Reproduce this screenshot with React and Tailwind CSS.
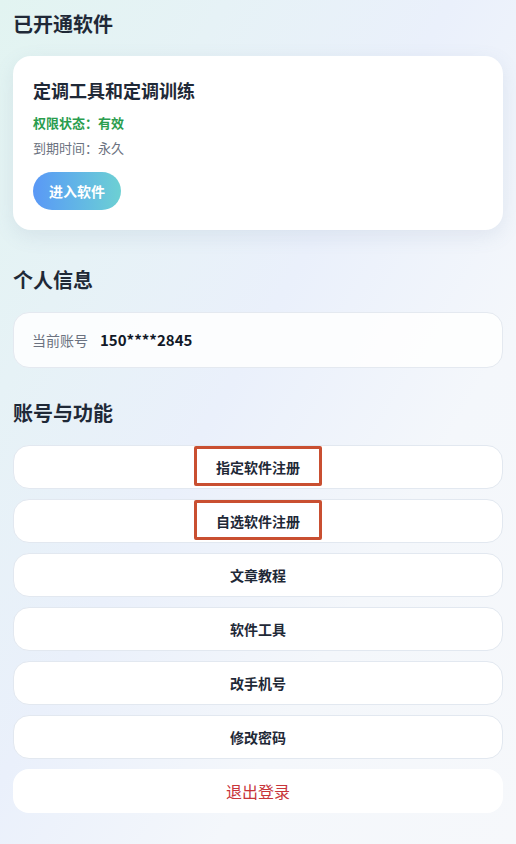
import React from 'react';

const actions = [
    { label: '指定软件注册', marked: true },
    { label: '自选软件注册', marked: true },
    { label: '文章教程' },
    { label: '软件工具' },
    { label: '改手机号' },
    { label: '修改密码' },
];

const SectionTitle = ({ children, className = '' }) => (
    <h2 className={`text-[20px] leading-7 font-bold text-[#1f2937] ${className}`}>{children}</h2>
);

const App = () => {
    return (
        <div
            className="min-h-[844px] w-full bg-[linear-gradient(120deg,#e2f4f1_0%,#eaf0fb_45%,#f4f7fb_70%,#f6f8fb_100%)] px-[13px] pt-[10px] pb-8"
            style={{ fontFamily: '"Noto Sans CJK SC", "Noto Sans", sans-serif' }}
        >
            {/* Opened software */}
            <SectionTitle>已开通软件</SectionTitle>
            <div className="mt-[18px] rounded-[18px] bg-white p-5 shadow-[0_6px_20px_rgba(100,120,160,0.12)]">
                <h3 className="text-[18px] leading-7 font-bold text-[#1f2937]">定调工具和定调训练</h3>
                <p className="mt-[9px] text-[13px] leading-5 font-bold text-[#2a9d4e]">权限状态：有效</p>
                <p className="mt-[5px] text-[13px] leading-5 text-[#6b7280]">到期时间：永久</p>
                <button className="mt-[14px] h-[38px] px-4 rounded-full bg-gradient-to-r from-[#5a98f6] to-[#6dd0d3] text-[14px] font-bold text-white">
                    进入软件
                </button>
            </div>

            {/* Personal info */}
            <SectionTitle className="mt-9">个人信息</SectionTitle>
            <div className="mt-[18px] h-14 rounded-2xl border border-[#e4e9f0] bg-white/85 flex items-center px-[18px] gap-3">
                <span className="text-[14px] text-[#6b7280]">当前账号</span>
                <span className="text-[15px] font-bold text-[#111827]">150****2845</span>
            </div>

            {/* Account & functions */}
            <SectionTitle className="mt-[31px]">账号与功能</SectionTitle>
            <div className="mt-[18px] flex flex-col gap-[10px]">
                {actions.map(a => (
                    <button
                        key={a.label}
                        className="relative h-11 rounded-2xl border border-[#e2e8f0] bg-white flex items-center justify-center text-[14px] font-bold text-[#1f2937]"
                    >
                        {a.label}
                        {a.marked && (
                            <span className="absolute left-1/2 top-0 h-10 w-[128px] -translate-x-1/2 border-[3px] border-[#c94f31] rounded-[2px]" />
                        )}
                    </button>
                ))}
                <button className="h-11 rounded-2xl bg-white flex items-center justify-center text-[16px] text-[#c8353a]">
                    退出登录
                </button>
            </div>
        </div>
    );
};

export default App;
